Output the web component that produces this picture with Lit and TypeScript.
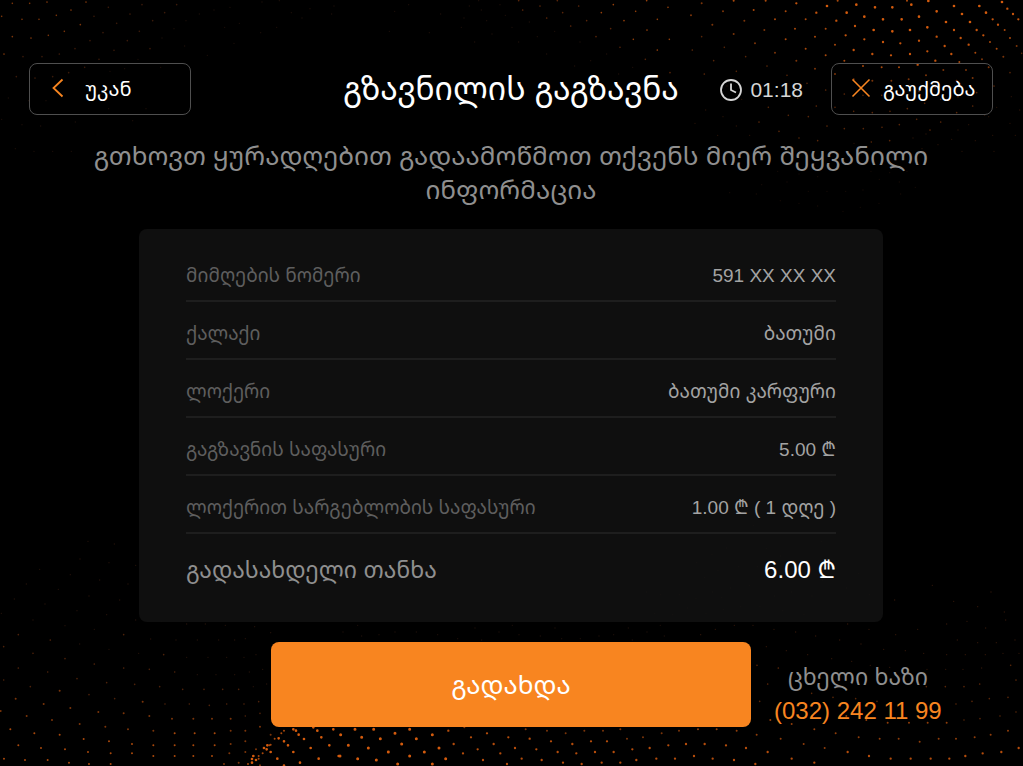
import { LitElement, html, svg, css } from "lit";
import { customElement, state } from "lit/decorators.js";

interface Row {
  label: string;
  value: string;
}

/** A patch of the dotted backdrop: origin on the canvas, then "x,y" pairs in thirds of a unit. */
interface Patch {
  x: number;
  y: number;
  size: number;
  color: string;
  dots: string;
}

const PATCHES: Patch[] = [
  // top left
  { x: 0, y: 0, size: 5, color: "#7d360a", dots: "37,10 89,10 141,6 5,49 66,58 117,58 169,46 213,30 258,6 37,110 93,114 145,106 193,94 241,74 12,162" },
  { x: 0, y: 0, size: 5, color: "#3a1a0a", dots: "325,22 282,49 309,98 350,70 426,14 270,122 225,146 178,162 126,170 69,170 342,151 390,42 530,14 494,38 458,62 450,146 382,122 418,94 49,230 105,234 158,230 206,218 254,202 297,178" },
  { x: 0, y: 0, size: 4, color: "#1d0f09", dots: "522,86 486,114 558,62 598,42 642,30 690,22 554,138 414,178 374,206 330,214 482,202 25,294 86,302 138,302 186,290 282,270 326,326 438,326 5,358 66,374 122,378 226,366 398,362 46,446 102,454 158,454 214,454 674,82 718,70 786,6 838,2 830,82 782,98 702,130 622,166 874,38 930,26 1002,18 995,42 906,54" },
  // top, towards the bright corner
  { x: 340, y: 0, size: 5, color: "#96400a", dots: "920,2 984,22 887,34 952,58 852,62 921,90 820,14 988,118 880,118 952,150 784,38" },
  { x: 340, y: 0, size: 5, color: "#582509", dots: "536,2 652,2 600,18 716,18 548,30 668,38 740,62 620,54 812,86 692,78 768,110 840,142 916,178 990,218" },
  { x: 340, y: 0, size: 4, color: "#1d0f09", dots: "416,2 480,14 424,30 496,46 388,18 568,66 440,62 516,82 644,94 592,110 456,102 536,126 720,126 800,162 620,162 704,198 752,182 878,202 836,222 372,54 268,98 148,94 206,14 164,34 364,82 404,126 302,42" },
  // top right
  { x: 683, y: 0, size: 8, color: "#d45b0d", dots: "432,18 520,14 576,22 628,22 685,14 736,3 813,18 889,18 761,34 837,42 708,50 544,50 600,58 656,58 733,82 789,66 861,66 572,90 628,94 681,90 491,38 909,38 957,6" },
  { x: 683, y: 0, size: 7, color: "#c3530c", dots: "340,10 400,38 460,62 516,78 544,118 600,126 652,130 708,122 761,110 813,90 881,90 929,58 973,26 945,74 901,106 833,114 785,138 733,154 681,162 624,166 568,162 512,150 488,106 990,42 1006,58 857,134 805,162 757,182 704,194" },
  { x: 683, y: 0, size: 6, color: "#a8480b", dots: "248,2 152,2 212,30 308,34 368,58 428,86 396,110 456,134 336,86 276,58 428,166 484,182 540,198 596,202 648,202 965,90 921,126 877,158 829,186 981,114 941,146 464,2 308,118 368,146 672,2" },
  { x: 683, y: 0, size: 6, color: "#7a3409", dots: "56,10 120,34 184,62 244,90 152,102 216,130 88,74 24,46 276,158 340,182 396,206 456,222 897,178 849,210 781,210 729,226 677,238 625,242 568,242 512,238 1001,138 961,170 917,202 869,234 821,242 797,262" },
  { x: 683, y: 0, size: 5, color: "#582608", dots: "188,170 124,142 56,110 28,150 92,182 64,222 160,214 252,198 312,226 372,250 428,270 484,282 540,286 596,286 652,282 708,274 757,262 773,298 725,310 673,326 621,334 568,338 512,334 456,322 400,318 344,294 825,290 881,278 933,258 981,218 1016,160 821,338 869,318 316,346 256,322 288,394 228,366 376,350 432,378 484,386 541,386 597,382 649,374 701,358 348,414 404,422 620,422 565,426 773,366 741,390" },
  { x: 683, y: 0, size: 4, color: "#281207", dots: "176,298 132,258 68,330 120,350 36,370 104,406 200,406 160,378 729,402 690,414 765,434 717,446 806,418 825,390 857,374 905,346 941,322 985,290 1010,330 981,370 929,406 877,422 837,454 917,350 997,406 933,454 513,430 600,462" },
  { x: 683, y: 0, size: 4, color: "#160b06", dots: "564,514 620,518 672,514 404,530 348,522 284,514 236,554 376,574 432,574 488,574 540,570 589,538 649,546 697,562 653,582 312,546 140,578 220,582 292,602 348,610 404,618 480,634 532,622 588,610" },
  // bottom left
  { x: 0, y: 540, size: 4, color: "#24120a", dots: "264,4 343,12 240,57 119,88 327,68 211,104 175,148 79,132 299,120 407,76 384,132 43,177 267,168 359,180 231,212 320,224 135,192 99,240 195,257 283,268 4,220 407,240 484,244 239,312 327,328 416,340 452,297 528,300 592,300 656,300 704,300 560,252 616,252 676,256 764,260 812,278 736,296 560,352 624,352 680,352 732,352 768,344 800,432 788,388 748,396 704,404 648,404 592,404 760,440" },
  { x: 0, y: 540, size: 5, color: "#4e220a", dots: "55,284 151,300 371,284 99,340 195,356 283,372 371,384 55,384 11,320 491,344 524,396 448,388 404,433 479,440 548,448 612,448 668,448 716,448 231,416 320,428 143,396 11,420 91,440 568,492 628,496 680,492 732,492 776,485 780,520 736,528 344,476 267,464 495,492" },
  { x: 0, y: 540, size: 6, color: "#7a3409", dots: "179,452 47,476 131,492 211,504 428,485 295,516 371,520 448,528 516,536 580,536 636,536 692,536 2,513 239,552 316,560 384,568 692,572 736,572 780,560 156,540 80,528 460,572 736,604 692,612 768,628 736,636 812,584 780,676 716,668 672,672 688,640" },
  { x: 0, y: 540, size: 6, color: "#a8480b", dots: "31,568 103,580 179,584 251,597 327,604 396,612 460,616 524,616 580,616 644,616 524,580 584,580 644,580 55,616 123,624 195,628 264,636 332,640 396,640 460,648 524,648 580,648 636,648 12,656 75,660 143,660 207,668 267,672 332,672 852,572 844,580 824,596 812,614 808,616 788,640 776,648 776,656 744,672" },
  { x: 0, y: 540, size: 8, color: "#d45b0d", dots: "880,568 888,572 896,584 912,597 836,595 852,604 864,616 880,636 812,636 800,628 802,616 792,624 760,648 756,657 768,660 756,668 832,656 900,668 956,656 932,624 988,616 964,592 952,572 1000,568 940,562 1016,648 852,677" },
  // bottom centre
  { x: 340, y: 620, size: 9, color: "#d45b0d", dots: "25,376 53,416 85,384 109,420 145,396 65,352 121,356 45,328 101,328 165,340 185,372 173,432 209,408 253,396 277,432 229,356 209,328 297,384 317,416 277,344 2,344 0,408" },
  { x: 340, y: 620, size: 7, color: "#b44c0b", dots: "325,332 341,372 369,400 393,352 413,388 429,420 461,372 481,400 501,432 441,340 505,352 525,384 545,416 589,388 605,420 633,364 653,396 669,428 569,356 697,372 709,400 725,432 765,396 785,428 821,396 841,428 877,388 889,420 929,384 949,416 985,376 1005,416 753,364 801,364" },
  { x: 340, y: 620, size: 6, color: "#7a3409", dots: "373,322 557,328 621,332 677,340 733,332 789,332 841,328 861,356 909,352 965,340 1017,332" },
  { x: 340, y: 620, size: 4, color: "#1d0f09", dots: "9,36 65,48 117,44 165,36 229,36 293,44 353,56 425,60 477,36 537,44 601,48 665,56 721,56 777,48 821,44 877,60 921,36 973,48 53,16 405,24 517,16 645,24 865,24 961,16" },
  // bottom right
  { x: 683, y: 560, size: 4, color: "#301609", dots: "635,120 748,76 812,124 884,140 924,96 968,180 852,184 908,204 964,156 704,208 791,192 638,224 823,240 884,248 940,248 996,240 53,224 97,208 273,208 154,196 210,196 338,216 398,228 470,240 534,252 494,192 558,208 250,260 310,272 374,284 446,296 602,268 506,304 667,272 722,280 791,284 847,284 907,284 960,280 1008,280 562,316 620,322 676,328 732,328 788,328 840,328 896,324" },
  { x: 683, y: 560, size: 5, color: "#582608", dots: "222,316 286,324 254,372 386,400 450,412 518,416 582,424 730,380 787,380 843,380 890,372 983,316 999,360 975,412 919,416 867,424 819,432 951,468 999,456 891,476 843,480 230,424" },
  { x: 683, y: 560, size: 6, color: "#8f3d0a", dots: "262,480 326,492 394,508 490,468 550,480 614,488 678,488 734,488 791,488 458,520 527,532 590,536 647,536 710,545 767,536 819,536 875,532 923,524 975,512 221,524 293,536 161,512 101,508 45,508 362,552 425,564" },
  { x: 683, y: 560, size: 7, color: "#b44c0b", dots: "9,552 65,552 129,556 189,564 33,588 89,596 153,600 217,612 254,576 326,596 394,608 494,576 558,588 623,596 683,596 743,596 799,596 847,588 899,580 955,576 1007,564" },
  // faint grain under the card
  { x: 540, y: 420, size: 4, color: "#3a2212", dots: "559,384 640,316 679,385 722,408 844,364 516,404 470,428 596,440 652,440 534,452 494,472 572,504 628,496 518,516 692,472 738,460 848,480 755,516 816,528 920,504 956,460 988,524 362,524 320,516 418,524 468,536 545,532 602,560 660,560 550,568 498,580 442,564 398,584 344,580 728,572 792,584 704,528" },
];

const ROWS: Row[] = [
  { label: "მიმღების ნომერი", value: "591 XX XX XX" },
  { label: "ქალაქი", value: "ბათუმი" },
  { label: "ლოქერი", value: "ბათუმი კარფური" },
  { label: "გაგზავნის საფასური", value: "5.00 ₾" },
  { label: "ლოქერით სარგებლობის საფასური", value: "1.00 ₾ ( 1 დღე )" },
];

@customElement("dotted-backdrop")
export class DottedBackdrop extends LitElement {
  static styles = css`
    :host {
      display: block;
    }
    .canvas {
      display: block;
      width: 100%;
      height: 100%;
    }
  `;

  private patch(p: Patch) {
    const r = p.size / 2;
    const d = p.dots
      .split(" ")
      .map((pair) => {
        const [x, y] = pair.split(",").map(Number);
        return `M${x - r} ${y}a${r} ${r} 0 1 0 ${p.size} 0a${r} ${r} 0 1 0 ${-p.size} 0`;
      })
      .join("");
    return svg`<path fill=${p.color} transform="translate(${p.x} ${p.y}) scale(0.33333)" d=${d}></path>`;
  }

  render() {
    return html`
      <svg class="canvas" viewBox="0 0 1023 766" preserveAspectRatio="xMidYMid slice" aria-hidden="true">
        ${PATCHES.map((p) => this.patch(p))}
      </svg>
    `;
  }
}

@customElement("app-root")
export class AppRoot extends LitElement {
  @state() private time = "01:18";

  static styles = css`
    :host {
      display: block;
      position: relative;
      min-height: 100vh;
      overflow: hidden;
      box-sizing: border-box;
      background: #000;
      color: #fff;
      font-family: "Liberation Sans", "Noto Sans Georgian", "DejaVu Sans", sans-serif;
    }
    .backdrop {
      position: absolute;
      inset: 0;
    }
    .page {
      position: relative;
      display: flex;
      flex-direction: column;
      padding: 63px 1px 0 0;
    }
    .header {
      display: grid;
      grid-template-columns: 1fr auto 1fr;
      align-items: center;
      padding: 0 29px;
    }
    .title {
      margin: 0;
      font-size: 32px;
      line-height: 52px;
      font-weight: 400;
      white-space: nowrap;
    }
    .side {
      display: flex;
      align-items: center;
      justify-content: flex-end;
      gap: 28px;
    }
    .outline {
      box-sizing: border-box;
      display: flex;
      align-items: center;
      width: 162px;
      height: 52px;
      padding: 0 16px 2px 19px;
      border: 1px solid #4f4f4f;
      border-radius: 8px;
      background: transparent;
      color: #fff;
      font: inherit;
      font-size: 20px;
      white-space: nowrap;
      cursor: pointer;
    }
    .back {
      gap: 16px;
    }
    .cancel {
      gap: 12px;
    }
    .icon {
      flex: none;
      display: block;
    }
    .timer {
      display: flex;
      align-items: center;
      gap: 8px;
      padding-top: 2px;
      color: #d6d6d6;
      font-size: 21px;
      line-height: 24px;
    }
    .lead {
      margin: 24px 80px 0;
      color: #8f8f8f;
      font-size: 26px;
      line-height: 34px;
      text-align: center;
    }
    .card {
      box-sizing: border-box;
      width: 744px;
      max-width: 100%;
      margin: 22px auto 0;
      padding: 15px 47px 17px;
      border-radius: 8px;
      background: rgba(17, 17, 17, 0.9);
    }
    .rows {
      margin: 0;
    }
    .row {
      box-sizing: border-box;
      display: flex;
      align-items: center;
      justify-content: space-between;
      min-height: 58px;
      padding-top: 8px;
      border-bottom: 2px solid #1e1e1e;
      font-size: 19px;
      line-height: 24px;
    }
    .label {
      color: #5e5e5e;
    }
    .value {
      margin: 0;
      color: #a3a3a3;
    }
    .total {
      min-height: 71px;
      padding: 0;
      border: 0;
      font-size: 24px;
      line-height: 30px;
    }
    .total .label {
      color: #8f8f8f;
      font-size: 23px;
    }
    .total .value {
      color: #fff;
    }
    .footer {
      display: grid;
      grid-template-columns: 1fr minmax(0, 480px) 1fr;
      align-items: start;
      margin-top: 20px;
    }
    .pay {
      grid-column: 2;
      height: 85px;
      padding: 0 0 2px;
      border: 0;
      border-radius: 8px;
      background: #f88520;
      color: #fff;
      font: inherit;
      font-size: 26px;
      cursor: pointer;
    }
    .hotline {
      justify-self: start;
      margin: 18px 0 0 23px;
      color: #8f8f8f;
      font-size: 23px;
      line-height: 34px;
      text-align: center;
      white-space: nowrap;
    }
    .phone {
      display: block;
      color: #f88520;
      font-size: 24px;
      text-decoration: none;
    }
  `;

  render() {
    return html`
      <dotted-backdrop class="backdrop"></dotted-backdrop>
      <main class="page">
        <header class="header">
          <button class="outline back" type="button">
            <svg class="icon" width="20" height="20" viewBox="0 0 20 20" fill="none" stroke="#f88520" stroke-width="1.8">
              <path d="M13.5 1.5 4.5 10l9 8.500"></path>
            </svg>
            <span>უკან</span>
          </button>
          <h1 class="title">გზავნილის გაგზავნა</h1>
          <div class="side">
            <span class="timer">
              <svg class="icon" width="22" height="22" viewBox="0 0 22 22" fill="none" stroke="#d6d6d6" stroke-width="1.8">
                <circle cx="11" cy="11" r="10"></circle>
                <path d="M11 4.500V11l5 2.500"></path>
              </svg>
              <time>${this.time}</time>
            </span>
            <button class="outline cancel" type="button">
              <svg class="icon" width="20" height="20" viewBox="0 0 20 20" fill="none" stroke="#f88520" stroke-width="1.600">
                <path d="M1.500 1.500 18.500 18.500M18.500 1.500 1.500 18.500"></path>
              </svg>
              <span>გაუქმება</span>
            </button>
          </div>
        </header>
        <p class="lead">გთხოვთ ყურადღებით გადაამოწმოთ თქვენს მიერ შეყვანილი ინფორმაცია</p>
        <section class="card">
          <dl class="rows">
            ${ROWS.map(
              (row) => html`
                <div class="row">
                  <dt class="label">${row.label}</dt>
                  <dd class="value">${row.value}</dd>
                </div>
              `,
            )}
            <div class="row total">
              <dt class="label">გადასახდელი თანხა</dt>
              <dd class="value">6.00 ₾</dd>
            </div>
          </dl>
        </section>
        <footer class="footer">
          <button class="pay" type="button">გადახდა</button>
          <div class="hotline">
            <span>ცხელი ხაზი</span>
            <a class="phone" href="tel:+995322421199">(032) 242 11 99</a>
          </div>
        </footer>
      </main>
    `;
  }
}
